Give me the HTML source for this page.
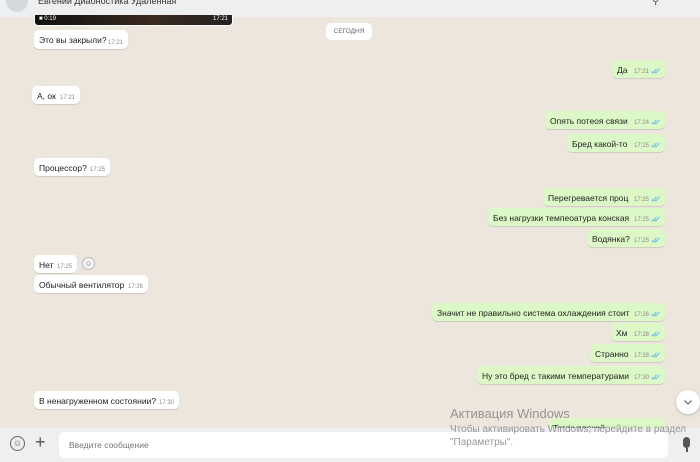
<!DOCTYPE html><html><head><meta charset="utf-8"><style>
*{margin:0;padding:0;box-sizing:border-box}
body{width:700px;height:462px;overflow:hidden;background:#ece6dd;font-family:"Liberation Sans",sans-serif;position:relative;font-size:8.5px;color:#222}
.h{position:absolute;left:0;top:0;width:700px;height:17px;background:#eeeff1}
.b{position:absolute;height:18px;border-radius:5px;background:#fff;box-shadow:0 1px .5px rgba(0,0,0,.12);padding:5px 0 0 5px;white-space:nowrap}
.r{background:#dcf8c6;}
.t{position:absolute;right:5px;bottom:3px;font-size:6px;color:#888}
.r .t{right:16px}
.k{position:absolute;right:5px;bottom:4px;width:9px;height:6px}
.f{position:absolute;left:0;top:428px;width:700px;height:34px;background:#eeeff1}
</style></head><body>
<svg width="0" height="0" style="position:absolute"><symbol id="k" viewBox="0 0 9 6"><path d="M0.5 3.5L2 5L5.5 0.8M3.5 3.8L4.8 5L8.5 0.8" fill="none" stroke="#5fb5f0" stroke-width="0.9"/></symbol></svg>
<div class="h"><div style="position:absolute;left:6px;top:-10px;width:22px;height:22px;border-radius:50%;background:#d5d8dc"></div><div style="position:absolute;left:38px;top:-4px;font-size:9px;color:#333">Евгений Диабностика Удаленная</div><div style="position:absolute;left:652px;top:-4px;font-size:10px;color:#555">⚲</div></div>
<div style="position:absolute;left:34px;top:15px;width:199px;height:11px;background:linear-gradient(90deg,#111,#3a2a20 60%,#222);border-radius:0 0 4px 4px;border:1px solid #fff;border-top:none"><span style="position:absolute;left:4px;top:1px;color:#fff;font-size:6px">■ 0:19</span><span style="position:absolute;right:4px;top:1px;color:#fff;font-size:6px">17:21</span></div>
<div style="position:absolute;left:326px;top:23px;width:46px;height:17px;background:#fff;border-radius:5px;font-size:6.5px;color:#667;text-align:center;line-height:17px">СЕГОДНЯ</div>
<div class="b" style="left:34px;top:30px;width:94px;height:19px">Это вы закрыли?<span class="t">17:21</span></div>
<div class="b r" style="left:612px;top:60px;width:53px">Да<span class="t">17:21</span><svg class="k"><use href="#k"/></svg></div>
<div class="b" style="left:32px;top:86px;width:48px">А, ок<span class="t">17:21</span></div>
<div class="b r" style="left:545px;top:111px;width:120px">Опять потеоя связи<span class="t">17:24</span><svg class="k"><use href="#k"/></svg></div>
<div class="b r" style="left:567px;top:134px;width:98px">Бред какой-то<span class="t">17:25</span><svg class="k"><use href="#k"/></svg></div>
<div class="b" style="left:34px;top:158px;width:76px">Процессор?<span class="t">17:25</span></div>
<div class="b r" style="left:543px;top:188px;width:122px">Перегревается проц<span class="t">17:25</span><svg class="k"><use href="#k"/></svg></div>
<div class="b r" style="left:488px;top:208px;width:177px">Без нагрузки темпеоатура конская<span class="t">17:25</span><svg class="k"><use href="#k"/></svg></div>
<div class="b r" style="left:587px;top:229px;width:78px">Водянка?<span class="t">17:25</span><svg class="k"><use href="#k"/></svg></div>
<div class="b" style="left:34px;top:255px;width:43px">Нет<span class="t">17:25</span></div>
<div style="position:absolute;left:82px;top:257px;width:13px;height:13px;border-radius:50%;background:#f4f4f4;border:1px solid #bbb;font-size:8px;line-height:11px;text-align:center;color:#888">☺</div>
<div class="b" style="left:34px;top:275px;width:114px">Обычный вентилятор<span class="t">17:26</span></div>
<div class="b r" style="left:432px;top:303px;width:233px">Значит не правильно система охлаждения стоит<span class="t">17:26</span><svg class="k"><use href="#k"/></svg></div>
<div class="b r" style="left:611px;top:323px;width:54px">Хм<span class="t">17:28</span><svg class="k"><use href="#k"/></svg></div>
<div class="b r" style="left:590px;top:344px;width:75px">Странно<span class="t">17:28</span><svg class="k"><use href="#k"/></svg></div>
<div class="b r" style="left:477px;top:366px;width:188px">Ну это бред с такими температурами<span class="t">17:30</span><svg class="k"><use href="#k"/></svg></div>
<div class="b" style="left:34px;top:391px;width:145px">В ненагруженном состоянии?<span class="t">17:30</span></div>
<div class="b r" style="left:548px;top:418px;width:117px">Тогда плохой</div>
<div style="position:absolute;left:676px;top:390px;width:24px;height:24px;border-radius:50%;background:#fff;box-shadow:0 1px 3px rgba(0,0,0,.2)"><svg width="24" height="24"><path d="M8.5 10.5L12 14L15.5 10.5" fill="none" stroke="#777" stroke-width="1.3"/></svg></div>
<div class="f"><div style="position:absolute;left:10px;top:8px;width:15px;height:15px;border-radius:50%;border:1.5px solid #666;font-size:9px;text-align:center;line-height:12px;color:#666">☺</div><div style="position:absolute;left:35px;top:4px;font-size:18px;color:#555">+</div><div style="position:absolute;left:59px;top:4px;width:609px;height:26px;background:#fff;border-radius:6px;padding:8px 10px;font-size:8.5px;color:#777">Введите сообщение</div><div style="position:absolute;left:683px;top:9px;width:7px;height:11px;border-radius:4px;background:#555"></div><div style="position:absolute;left:686px;top:20px;width:1.5px;height:4px;background:#555"></div></div>
<div style="position:absolute;left:450px;top:406px;font-size:13px;color:rgba(120,120,120,.75)">Активация Windows</div>
<div style="position:absolute;left:450px;top:423px;font-size:10px;line-height:13px;color:rgba(120,120,120,.75)">Чтобы активировать Windows, перейдите в раздел<br>"Параметры".</div>
</body></html>
